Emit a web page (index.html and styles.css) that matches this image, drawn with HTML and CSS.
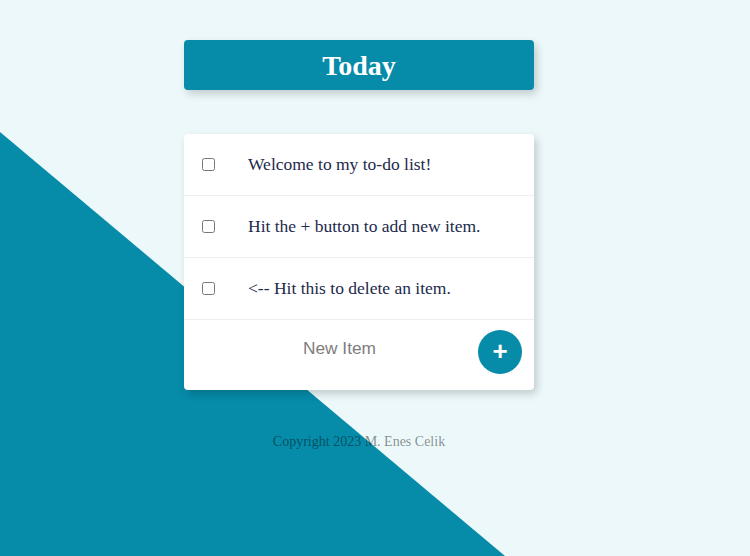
FILE: index.html
```html
<!DOCTYPE html>
<html>
<head>
<meta charset="utf-8">
<link rel="stylesheet" href="styles.css">
</head>
<body>
<div class="bg-shape"></div>
<main class="wrap">
  <div class="heading"><h1>Today</h1></div>
  <div class="card">
    <div class="item"><input type="checkbox"><p>Welcome to my to-do list!</p></div>
    <div class="item"><input type="checkbox"><p>Hit the + button to add new item.</p></div>
    <div class="item"><input type="checkbox"><p>&lt;-- Hit this to delete an item.</p></div>
    <form class="new-item">
      <input type="text" placeholder="New Item">
      <button type="button" class="add">+</button>
    </form>
  </div>
  <footer class="copy">Copyright 2023 M. Enes Celik</footer>
</main>
</body>
</html>
```
FILE: styles.css
```css
html, body {
  margin: 0;
  padding: 0;
  height: 556px;
  overflow: hidden;
}
body {
  background: #ecf8fa;
  font-family: "Liberation Serif", "Times New Roman", serif;
  position: relative;
}
.bg-shape {
  position: absolute;
  inset: 0;
  background: #068ba9;
  clip-path: polygon(0 132px, 505px 556px, 0 556px);
  z-index: 0;
}
.wrap {
  position: relative;
  z-index: 1;
  width: 350px;
  margin-left: 184px;
  padding-top: 40px;
}
.heading {
  background: #068ba9;
  height: 50px;
  border-radius: 4px;
  box-shadow: 3px 4px 8px rgba(0, 0, 0, 0.18);
  display: flex;
  align-items: center;
  justify-content: center;
}
.heading h1 {
  margin: 0;
  color: #fff;
  font-size: 28px;
  font-weight: bold;
  line-height: 1;
  padding-top: 1px;
}
.card {
  margin-top: 44px;
  background: #fff;
  border-radius: 4px;
  box-shadow: 3px 4px 8px rgba(0, 0, 0, 0.18);
}
.item {
  height: 62px;
  display: flex;
  align-items: center;
  border-bottom: 1px solid #eeeeee;
  box-sizing: border-box;
}
.item input {
  margin: 0 0 0 18px;
  width: 13px;
  height: 13px;
  flex-shrink: 0;
}
.item p {
  margin: 0 0 0 33px;
  font-size: 17.5px;
  color: #1c2a4b;
}
.new-item {
  height: 70px;
  display: flex;
  align-items: center;
}
.new-item input {
  border: none;
  outline: none;
  background: transparent;
  width: 150px;
  margin-left: 119px;
  font-family: "Liberation Sans", Arial, sans-serif;
  font-size: 17.3px;
  color: #333;
  padding: 0;
  margin-top: -14px;
}
.new-item input::placeholder {
  color: #7d7d7d;
}
.add {
  flex-shrink: 0;
  margin-left: auto;
  margin-right: 12px;
  width: 44px;
  height: 44px;
  border-radius: 50%;
  border: none;
  background: #068ba9;
  color: #fff;
  font-family: "Liberation Sans", Arial, sans-serif;
  font-size: 26px;
  font-weight: bold;
  line-height: 40px;
  padding: 0 0 3px 0;
  margin-top: -6px;
}
.copy {
  margin-top: 44px;
  text-align: center;
  font-size: 14px;
  color: rgba(0, 0, 0, 0.45);
}
```
